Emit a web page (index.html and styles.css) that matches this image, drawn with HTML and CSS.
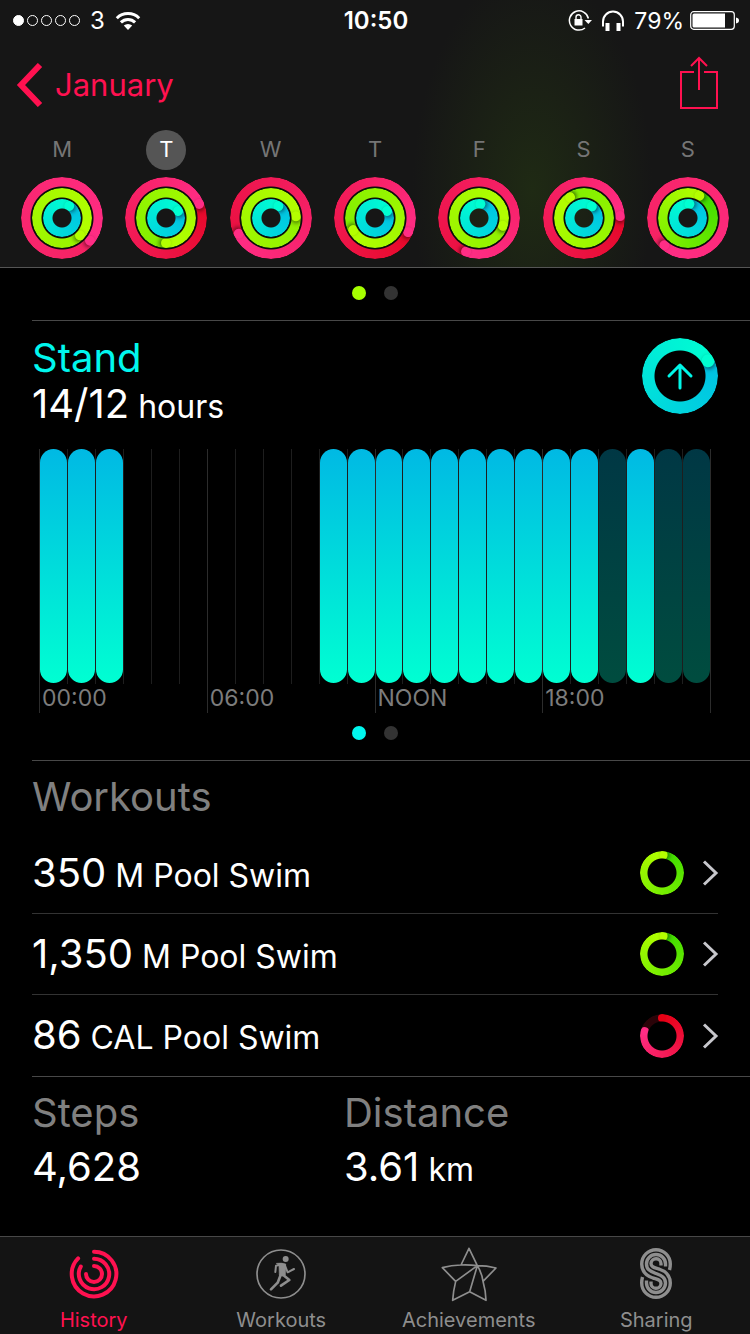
FILE: index.html
```html
<!DOCTYPE html>
<html lang="en">
<head>
<meta charset="utf-8">
<meta name="viewport" content="width=device-width, initial-scale=1">
<title>Activity</title>
<link rel="stylesheet" href="styles.css">
</head>
<body>
<header class="top">
  <div class="status">
    <div class="status-left">
      <span class="signal"><i class="on"></i><i></i><i></i><i></i><i></i></span>
      <span>3</span>
      <svg width="26" height="20" viewBox="0 0 26 20" fill="none" stroke="#fff" stroke-width="3"><path d="M1.8 7.2a15.8 15.8 0 0 1 22.4 0M5.9 11.4a10 10 0 0 1 14.2 0"/><path d="M8.8 14.6a6 6 0 0 1 8.4 0L13 19z" fill="#fff" stroke="none"/></svg>
    </div>
    <time class="clock">10:50</time>
    <div class="status-right">
      <svg width="24" height="22" viewBox="0 0 24 22" fill="none" stroke="#fff"><path d="M20.4 8.5A9.6 9.6 0 1 0 17 18" stroke-width="1.5"/><path d="M16.5 10h7.5l-3.7 4z" fill="#fff" stroke="none"/><path d="M6.500 9h8v6.500h-8z" fill="#fff" stroke="none"/><path d="M8 9.500V7.300a2.500 2.500 0 0 1 5 0v2.200" stroke-width="1.400"/></svg>
      <svg width="24" height="22" viewBox="0 0 24 22" fill="none" stroke="#fff"><path d="M2 16.500V11.500a10 10 0 0 1 20 0v5" stroke-width="2"/><path d="M4.500 13h4v8h-4zM15.500 13h4v8h-4z" fill="#fff" stroke="none"/></svg>
      <span class="charge">79%
        <svg width="49" height="19" viewBox="0 0 49 19"><rect x=".7" y=".7" width="43.600" height="17.600" rx="3" fill="none" stroke="#fff" stroke-width="1.200"/><path d="M2.500 4a1.500 1.500 0 0 1 1.500-1.500H35v14H4A1.500 1.500 0 0 1 2.500 15z" fill="#fff"/><path d="M46 6.500c4 .5 4 5.500 0 6z" fill="#fff"/></svg>
      </span>
    </div>
  </div>
  <nav class="bar">
    <a class="back" href="#january"><svg width="28" height="44" viewBox="0 0 28 44" fill="none" stroke="#ff1150" stroke-width="6"><path d="M25 2 6 22 25 42"/></svg>January</a>
    <button class="share" type="button" aria-label="Share"><svg width="40" height="54" viewBox="0 0 40 54" fill="none" stroke="#ff1150" stroke-width="2"><path d="M15 16H2v36h36V16H25M20 34V2M12 10l8-8 8 8"/></svg></button>
  </nav>
  <div class="days">
    <button class="day" type="button"><span class="letter">M</span><span class="rings"><i class="ring move" style="--end:129deg;--tail:#f62262"></i><i class="ring exercise" style="--end:134deg;--tail:#98f400"></i><i class="ring stand" style="--end:31deg"></i></span></button>
    <button class="day selected" type="button" aria-current="date"><span class="letter">T</span><span class="rings"><i class="ring move" style="--end:67deg;--tail:#e50828"></i><i class="ring exercise" style="--end:180deg;--tail:#80ee00"></i><i class="ring stand" style="--end:60deg"></i></span></button>
    <button class="day" type="button"><span class="letter">W</span><span class="rings"><i class="ring move" style="--end:244deg;--tail:#ea1040"></i><i class="ring exercise" style="--end:86deg;--tail:#90f000"></i><i class="ring stand" style="--end:32deg"></i></span></button>
    <button class="day" type="button"><span class="letter">T</span><span class="rings"><i class="ring move" style="--end:113deg;--tail:#e50828"></i><i class="ring exercise" style="--end:241deg;--tail:#80ee00"></i><i class="ring stand" style="--end:60deg"></i></span></button>
    <button class="day" type="button"><span class="letter">F</span><span class="rings"><i class="ring move" style="--end:201deg;--tail:#ea1040"></i><i class="ring exercise" style="--end:108deg;--tail:#90f000"></i><i class="ring stand" style="--end:6deg"></i></span></button>
    <button class="day" type="button"><span class="letter">S</span><span class="rings"><i class="ring move" style="--end:87deg;--tail:#e50828"></i><i class="ring exercise" style="--end:326deg;--tail:#80ee00"></i><i class="ring stand" style="--end:34deg"></i></span></button>
    <button class="day" type="button"><span class="letter">S</span><span class="rings"><i class="ring move" style="--end:221deg;--tail:#f62262"></i><i class="ring exercise" style="--end:27deg;--tail:#3cdc00"></i><i class="ring stand" style="--end:6deg"></i></span></button>
  </div>
</header>

<main class="content">
  <div class="dots dots-exercise"><i class="on"></i><i></i></div>

  <section class="stand-card">
    <div class="stand-head">
      <div>
        <h2 class="title cyan">Stand</h2>
        <p class="value">14/12<small> hours</small></p>
      </div>
      <div class="stand-ring">
        <i class="ring stand large" style="--end:61deg"></i>
        <svg class="arrow" width="30" height="30" viewBox="0 0 30 30" fill="none" stroke="#00f7e8" stroke-width="3" stroke-linecap="round" stroke-linejoin="round"><path d="M15 27V4M4 15 15 4l11 11"/></svg>
      </div>
    </div>
    <div class="chart">
      <div class="hour"><b class="bar-fill"></b><span>00:00</span></div>
      <div class="hour"><b class="bar-fill"></b></div>
      <div class="hour"><b class="bar-fill"></b></div>
      <div class="hour"></div>
      <div class="hour"></div>
      <div class="hour"></div>
      <div class="hour"><span>06:00</span></div>
      <div class="hour"></div>
      <div class="hour"></div>
      <div class="hour"></div>
      <div class="hour"><b class="bar-fill"></b></div>
      <div class="hour"><b class="bar-fill"></b></div>
      <div class="hour"><b class="bar-fill"></b><span>NOON</span></div>
      <div class="hour"><b class="bar-fill"></b></div>
      <div class="hour"><b class="bar-fill"></b></div>
      <div class="hour"><b class="bar-fill"></b></div>
      <div class="hour"><b class="bar-fill"></b></div>
      <div class="hour"><b class="bar-fill"></b></div>
      <div class="hour"><b class="bar-fill"></b><span>18:00</span></div>
      <div class="hour"><b class="bar-fill"></b></div>
      <div class="hour"><b class="bar-fill idle"></b></div>
      <div class="hour"><b class="bar-fill"></b></div>
      <div class="hour"><b class="bar-fill idle"></b></div>
      <div class="hour"><b class="bar-fill idle"></b></div>
    </div>
    <div class="dots dots-stand"><i class="on"></i><i></i></div>
  </section>

  <section class="workouts">
    <h2 class="title">Workouts</h2>
    <a class="row" href="#swim-350"><span class="value">350<small> M Pool Swim</small></span><i class="ring exercise small" style="--end:5deg;--tail:#3cdc00"></i><svg class="chevron" width="18" height="28" viewBox="0 0 18 28"><path d="M3 2.500 15 14 3 25.500"/></svg></a>
    <a class="row" href="#swim-1350"><span class="value">1,350<small> M Pool Swim</small></span><i class="ring exercise small" style="--end:5deg;--tail:#3cdc00"></i><svg class="chevron" width="18" height="28" viewBox="0 0 18 28"><path d="M3 2.500 15 14 3 25.500"/></svg></a>
    <a class="row" href="#swim-86"><span class="value">86<small> CAL Pool Swim</small></span><i class="ring move small partial" style="--end:286deg"></i><svg class="chevron" width="18" height="28" viewBox="0 0 18 28"><path d="M3 2.500 15 14 3 25.500"/></svg></a>
  </section>

  <section class="totals">
    <div><h2 class="title">Steps</h2><p class="value">4,628</p></div>
    <div><h2 class="title">Distance</h2><p class="value">3.61<small> km</small></p></div>
  </section>
</main>

<nav class="tabs">
  <a class="tab active" href="#history" aria-current="page"><svg width="50" height="52" viewBox="0 0 50 52" fill="none" stroke="currentColor" stroke-width="4" stroke-linecap="round"><path d="M25 3.700A22.300 22.300 0 1 1 9.100 10.400M25 10.800A15.200 15.200 0 1 1 11.800 18.500M25 18A8 8 0 1 1 17 26"/></svg>History</a>
  <a class="tab" href="#workouts"><svg width="50" height="52" viewBox="771 69 150 156" fill="none" stroke="currentColor" stroke-linecap="round" stroke-linejoin="round"><circle cx="846" cy="147" r="72" stroke-width="5"/><circle cx="860" cy="102" r="9" fill="currentColor" stroke="none"/><path d="M833 115Q848 113 860 117L859 150Q850 156 841 151L840 122Z" fill="currentColor" stroke-width="2"/><path d="M849 118 831 122 829 141M857 120 866 142 885 132" stroke-width="6"/><path d="M850 148 871 165 846 182M845 150 836 173 816 193" stroke-width="8"/></svg>Workouts</a>
  <a class="tab" href="#achievements"><svg width="58" height="52" viewBox="196 69 174 156" overflow="visible" fill="none" stroke="currentColor" stroke-width="5" stroke-linejoin="round"><path d="M283 70 259 120Q230 121 203 128L243 169Q236 197 234 226L285 200 334 226Q333 197 325 169L364 129Q336 122 308 122ZM259 120Q284 119 308 122L243 169M308 122 285 200M308 122Q322 145 325 169"/></svg>Achievements</a>
  <a class="tab" href="#sharing"><svg width="32" height="52" viewBox="0 0 32 52" fill="none" stroke="currentColor" stroke-width="3.400"><path id="strand" d="M29.500 22Q30.300 19 30.300 16A14.300 14.300 0 0 0 1.700 16C1.700 24 7 28 13 30C18 31.500 21 32 21 35.500A5 5 0 0 1 11 35V33.500"/><use href="#strand" transform="rotate(180 16 25.500)"/><path d="M25.500 18.500V16A9.500 9.500 0 0 0 6.500 16C6.500 22 11 23.500 16 25.500S25.500 29 25.500 35A9.500 9.500 0 0 1 6.500 35V32.500"/></svg>Sharing</a>
</nav>
</body>
</html>
```
FILE: styles.css
```css
* { box-sizing: border-box; }

body {
  margin: 0;
  min-height: 100vh;
  display: flex;
  flex-direction: column;
  background: #000;
  color: #fff;
  font-family: Inter, "Liberation Sans", sans-serif;
}

a { color: inherit; text-decoration: none; }
button { border: 0; padding: 0; background: none; color: inherit; font: inherit; }
svg { display: block; flex: none; }
h2, p { margin: 0; font-weight: 400; }

/* Header */
.top {
  background: radial-gradient(ellipse 120px 220px at 71% 190px, #1f2a14, transparent), #161616;
  border-bottom: 1px solid #555;
}
.status {
  display: grid;
  grid-template-columns: 1fr auto 1fr;
  align-items: center;
  height: 41px;
  padding: 0 11px 0 13px;
  font-size: 24px;
}
.status-left, .status-right, .charge { display: flex; align-items: center; }
.status-left { gap: 10px; }
.status-right { justify-content: flex-end; gap: 9px; }
.charge { gap: 6px; font-size: 23px; }
.clock { font-weight: 600; }
.signal { display: flex; gap: 3px; }
.signal i { width: 11px; height: 11px; border: 1px solid #fff; border-radius: 50%; }
.signal .on { background: #fff; }

.bar {
  display: flex;
  justify-content: space-between;
  align-items: center;
  height: 89px;
  padding: 0 31px 2px 15px;
}
.back { display: flex; align-items: center; gap: 12px; color: #ff1150; font-size: 31px; }
.share { padding-bottom: 4px; }

.days { display: grid; grid-template-columns: repeat(7, 1fr); padding: 0 10px 8px; }
.day { display: flex; flex-direction: column; align-items: center; gap: 7px; color: #757575; font-size: 22px; }
.letter { width: 40px; height: 40px; border-radius: 50%; line-height: 39px; }
.selected .letter { background: #555; color: #fff; }

/* Rings: a cone of colour cut to a band, with a round cap at --end */
.rings { display: grid; place-items: center; border-radius: 50%; background: radial-gradient(circle, transparent 12px, #0c0e0b 13px); }
.rings .ring { grid-area: 1 / 1; }
.ring {
  --size: 82px;
  --band: 10px;
  position: relative;
  flex: none;
  width: var(--size);
  height: var(--size);
  border-radius: 50%;
  background: conic-gradient(from var(--end), var(--tail), var(--head));
  -webkit-mask: radial-gradient(closest-side, transparent calc(100% - var(--band)), #000 calc(100% - var(--band) + 1px));
  mask: radial-gradient(closest-side, transparent calc(100% - var(--band)), #000 calc(100% - var(--band) + 1px));
}
.ring::after, .partial::before {
  content: "";
  position: absolute;
  top: 0;
  left: calc(50% - var(--band) / 2);
  width: var(--band);
  height: var(--band);
  border-radius: 50%;
  background: var(--head);
  transform-origin: 50% calc(var(--size) / 2);
}
.ring::after { transform: rotate(var(--end)); box-shadow: 2px 0 4px rgba(0, 0, 0, .5); }
.move { --head: #ff2d85; }
.exercise { --size: 60px; --head: #b4ff00; }
.stand { --size: 38px; --head: #00ffd2; --tail: #00bfe4; }
.large { --size: 76px; --band: 13px; }
.small { --size: 44px; --band: 8px; }
.partial { background: conic-gradient(#e60014, var(--head) var(--end), #2a0308 var(--end)); }
.partial::before { background: #e60014; }
.partial::after { box-shadow: none; }

/* Page dots */
.dots { display: flex; justify-content: center; gap: 18px; }
.dots i { width: 14px; height: 14px; border-radius: 50%; background: #333; }
.dots-exercise { padding: 18px 0 20px; }
.dots-exercise .on { background: #a6ff00; }
.dots-stand { padding: 13px 0 20px; }
.dots-stand .on { background: #00f7ee; }

/* Shared text */
.title { color: #808080; font-size: 40px; line-height: 48px; }
.cyan { color: #00f7ee; }
.value { font-size: 40px; line-height: 44px; }
.value small { font-size: 32px; }

.content { flex: 1; }
.stand-card, .workouts, .totals { margin-left: 32px; border-top: 1px solid #484848; }

.stand-head { display: flex; justify-content: space-between; padding: 13px 32px 0 0; }
.stand-ring { display: grid; place-items: center; align-self: flex-start; padding-top: 4px; }
.stand-ring > * { grid-area: 1 / 1; }

/* Hour chart */
.chart {
  display: grid;
  grid-template-columns: repeat(24, 1fr);
  align-items: start;
  margin: 20px 39px 0 7px;
  border-right: 1px solid #2c2c2c;
}
.hour { height: 235px; border-left: 1px solid #1e1e1e; color: #7c7c7c; font-size: 23px; }
.hour:nth-child(6n + 1) { display: flex; flex-direction: column; height: 264px; border-color: #2c2c2c; }
.hour span { margin-top: auto; padding-left: 2px; width: 0; line-height: 29px; }
.bar-fill { display: block; height: 234px; border-radius: 14px; background: linear-gradient(#00b9e4, #00ffd2); }
.idle { opacity: .3; }
.stand-card .dots { margin-left: -32px; }

/* Workouts */
.workouts { padding-top: 12px; }
.workouts .title { padding-bottom: 12px; }
.row { display: flex; align-items: center; height: 81px; margin-right: 32px; border-bottom: 1px solid #333; }
.row:last-child { border-bottom: 0; }
.row .value { flex: 1; padding-top: 2px; }
.chevron { margin-left: 17px; margin-right: -1px; fill: none; stroke: #c7c7cc; stroke-width: 3; }

/* Totals */
.totals { display: grid; grid-template-columns: 312px 1fr; padding: 12px 0 32px; }
.totals .value { margin-top: 8px; }

/* Tab bar */
.tabs { display: grid; grid-template-columns: repeat(4, 1fr); background: #141414; border-top: 1px solid #484848; }
.tab { display: flex; flex-direction: column; align-items: center; gap: 8px; padding: 11px 0 2px; color: #8e8e8e; font-size: 20px; line-height: 24px; }
.active { color: #ff1150; }
```
